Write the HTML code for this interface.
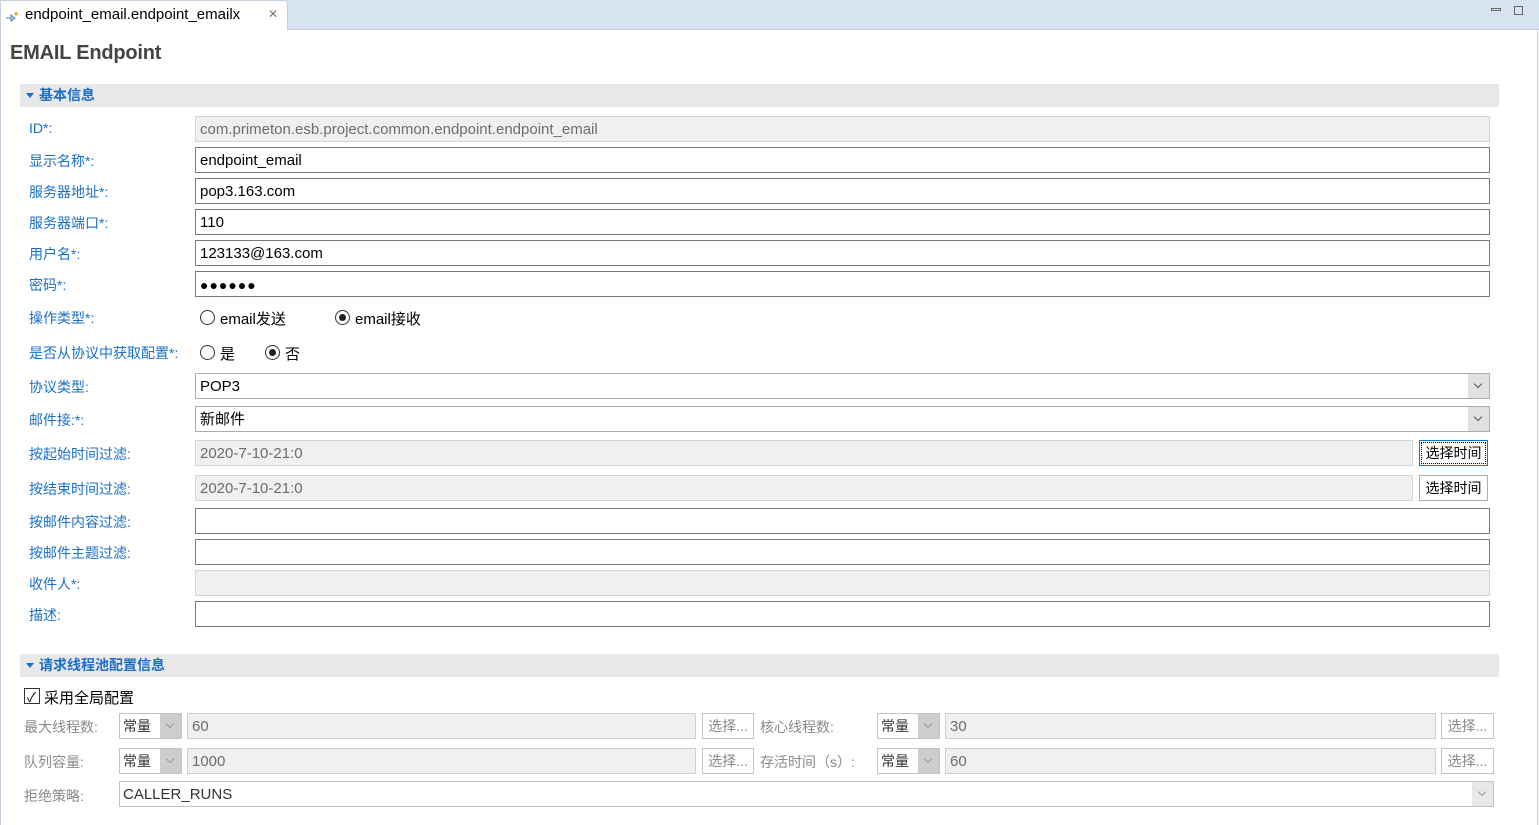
<!DOCTYPE html><html><head><meta charset="utf-8"><style>
*{box-sizing:border-box;margin:0;padding:0}
body{width:1539px;height:825px;position:relative;background:#fff;font-family:"Liberation Sans","Noto Sans CJK SC",sans-serif;font-size:15px;color:#000;overflow:hidden}
.a{position:absolute}
.lb{position:absolute;left:29px;color:#1a6fc9;font-size:14px}
.in{position:absolute;left:195px;width:1295px;height:26px;border:1px solid #7a7a7a;background:#fff;padding:3px 4px 0;line-height:20px;font-size:15px}
.dis{background:#f0f0f0;border-color:#d4d4d4;color:#6d6d6d}
.sec{position:absolute;left:20px;width:1479px;height:23px;background:#e8e8e8;color:#1a6fc9;font-weight:bold;font-size:14px;line-height:23px;padding-left:19px}
.sec:before{content:"";position:absolute;left:6px;top:9px;border-left:4px solid transparent;border-right:4px solid transparent;border-top:5px solid #1a6fc9}
.rad{position:absolute;width:15px;height:15px;border:1px solid #333;border-radius:50%;background:#fff}
.rad.on:after{content:"";position:absolute;left:3px;top:3px;width:7px;height:7px;border-radius:50%;background:#222}
.arr{position:absolute;right:0;top:0;width:21px;height:100%;background:#e1e1e1}
.arr:after{content:"";position:absolute;left:7px;top:7px;width:5px;height:5px;border-right:1px solid #555;border-bottom:1px solid #555;transform:rotate(45deg)}
.btn{position:absolute;border:1px solid #adadad;background:#fff;font-size:14px;text-align:center;line-height:24px}
.gl{position:absolute;color:#8a8a8a;font-size:14px}
.gi{position:absolute;height:26px;border:1px solid #cfcfcf;background:#f0f0f0;color:#6d6d6d;padding:3px 4px 0;line-height:20px}
.cb{position:absolute;height:26px;border:1px solid #c4c4c4;background:#fff;font-size:14px;line-height:24px;padding-left:3px;color:#333}
.cb .arr{background:#cdcdcd;width:21px}
.cb .arr:after{border-color:#999}
.gb{position:absolute;height:26px;border:1px solid #c4c4c4;background:#fff;color:#8a8a8a;font-size:14px;text-align:center;line-height:24px}
</style></head><body>
<div class="a" style="left:0;top:0;width:1539px;height:30px;background:#d7e3f1;border-bottom:1px solid #c5d2e0"></div>
<div class="a" style="left:0;top:0;width:288px;height:31px;background:#fff;border:1px solid #c5d2e0;border-bottom:none;border-radius:0 5px 0 0"></div>
<svg class="a" style="left:5px;top:8px" width="16" height="16" viewBox="0 0 16 16"><path d="M1 10h5M6 7v6l4-3z" stroke="#5a7fb5" fill="#c9d6ea"/><path d="M11 3l1 2 2 0-2 1 1 2-2-1-2 1 1-2-2-1 2 0z" fill="#e0b020"/></svg>
<div class="a" style="left:25px;top:6px;font-size:15px">endpoint_email.endpoint_emailx</div>
<div class="a" style="left:268px;top:7px;font-size:12px;color:#777">✕</div>
<div class="a" style="left:1491px;top:8px;width:10px;height:3px;border:1px solid #666"></div>
<div class="a" style="left:1514px;top:6px;width:9px;height:9px;border:1px solid #666"></div>
<div class="a" style="left:0;top:30px;width:1px;height:795px;background:#c5d2e0"></div>
<div class="a" style="left:1537px;top:30px;width:1px;height:795px;background:#c5d2e0"></div>
<div class="a" style="left:10px;top:42px;font-size:20px;font-weight:bold;color:#444;letter-spacing:-0.2px">EMAIL Endpoint</div>

<div class="sec" style="top:84px">基本信息</div>
<div class="lb" style="top:120px">ID*:</div><div class="in dis" style="top:116px">com.primeton.esb.project.common.endpoint.endpoint_email</div>
<div class="lb" style="top:151px">显示名称*:</div><div class="in" style="top:147px">endpoint_email</div>
<div class="lb" style="top:182px">服务器地址*:</div><div class="in" style="top:178px">pop3.163.com</div>
<div class="lb" style="top:213px">服务器端口*:</div><div class="in" style="top:209px">110</div>
<div class="lb" style="top:244px">用户名*:</div><div class="in" style="top:240px">123133@163.com</div>
<div class="lb" style="top:275px">密码*:</div><div class="in" style="top:271px;font-size:14px;letter-spacing:1px">●●●●●●</div>
<div class="lb" style="top:308px">操作类型*:</div>
<div class="rad" style="left:200px;top:310px"></div><div class="a" style="left:220px;top:308px">email发送</div>
<div class="rad on" style="left:335px;top:310px"></div><div class="a" style="left:355px;top:308px">email接收</div>
<div class="lb" style="top:343px">是否从协议中获取配置*:</div>
<div class="rad" style="left:200px;top:345px"></div><div class="a" style="left:220px;top:343px">是</div>
<div class="rad on" style="left:265px;top:345px"></div><div class="a" style="left:285px;top:343px">否</div>
<div class="lb" style="top:377px">协议类型:</div><div class="in" style="top:373px;border-color:#adadad">POP3<div class="arr"></div></div>
<div class="lb" style="top:410px">邮件接:*:</div><div class="in" style="top:406px;border-color:#adadad">新邮件<div class="arr"></div></div>
<div class="lb" style="top:444px">按起始时间过滤:</div><div class="in dis" style="top:440px;width:1218px">2020-7-10-21:0</div>
<div class="btn" style="left:1419px;top:440px;width:69px;height:26px;border:1px solid #0078d7;outline:1px dotted #000;outline-offset:-3px">选择时间</div>
<div class="lb" style="top:479px">按结束时间过滤:</div><div class="in dis" style="top:475px;width:1218px">2020-7-10-21:0</div>
<div class="btn" style="left:1419px;top:475px;width:69px;height:26px">选择时间</div>
<div class="lb" style="top:512px">按邮件内容过滤:</div><div class="in" style="top:508px"></div>
<div class="lb" style="top:543px">按邮件主题过滤:</div><div class="in" style="top:539px"></div>
<div class="lb" style="top:574px">收件人*:</div><div class="in dis" style="top:570px"></div>
<div class="lb" style="top:605px">描述:</div><div class="in" style="top:601px"></div>

<div class="sec" style="top:654px">请求线程池配置信息</div>
<div class="a" style="left:24px;top:688px;width:16px;height:16px;border:1px solid #333"></div>
<div class="a" style="left:27px;top:687px;font-size:13px">✓</div>
<div class="a" style="left:44px;top:687px;font-size:15px">采用全局配置</div>

<div class="gl" style="left:24px;top:717px">最大线程数:</div>
<div class="cb" style="left:119px;top:713px;width:63px">常量<div class="arr"></div></div>
<div class="gi" style="left:187px;top:713px;width:509px">60</div>
<div class="gb" style="left:702px;top:713px;width:52px">选择...</div>
<div class="gl" style="left:760px;top:717px">核心线程数:</div>
<div class="cb" style="left:877px;top:713px;width:63px">常量<div class="arr"></div></div>
<div class="gi" style="left:945px;top:713px;width:491px">30</div>
<div class="gb" style="left:1441px;top:713px;width:53px">选择...</div>

<div class="gl" style="left:24px;top:752px">队列容量:</div>
<div class="cb" style="left:119px;top:748px;width:63px">常量<div class="arr"></div></div>
<div class="gi" style="left:187px;top:748px;width:509px">1000</div>
<div class="gb" style="left:702px;top:748px;width:52px">选择...</div>
<div class="gl" style="left:760px;top:752px">存活时间（s）:</div>
<div class="cb" style="left:877px;top:748px;width:63px">常量<div class="arr"></div></div>
<div class="gi" style="left:945px;top:748px;width:491px">60</div>
<div class="gb" style="left:1441px;top:748px;width:53px">选择...</div>

<div class="gl" style="left:24px;top:786px">拒绝策略:</div>
<div class="cb" style="left:119px;top:781px;width:1375px;font-size:15px;padding-top:1px">CALLER_RUNS<div class="arr" style="background:#e8e8e8"></div></div>
</body></html>
